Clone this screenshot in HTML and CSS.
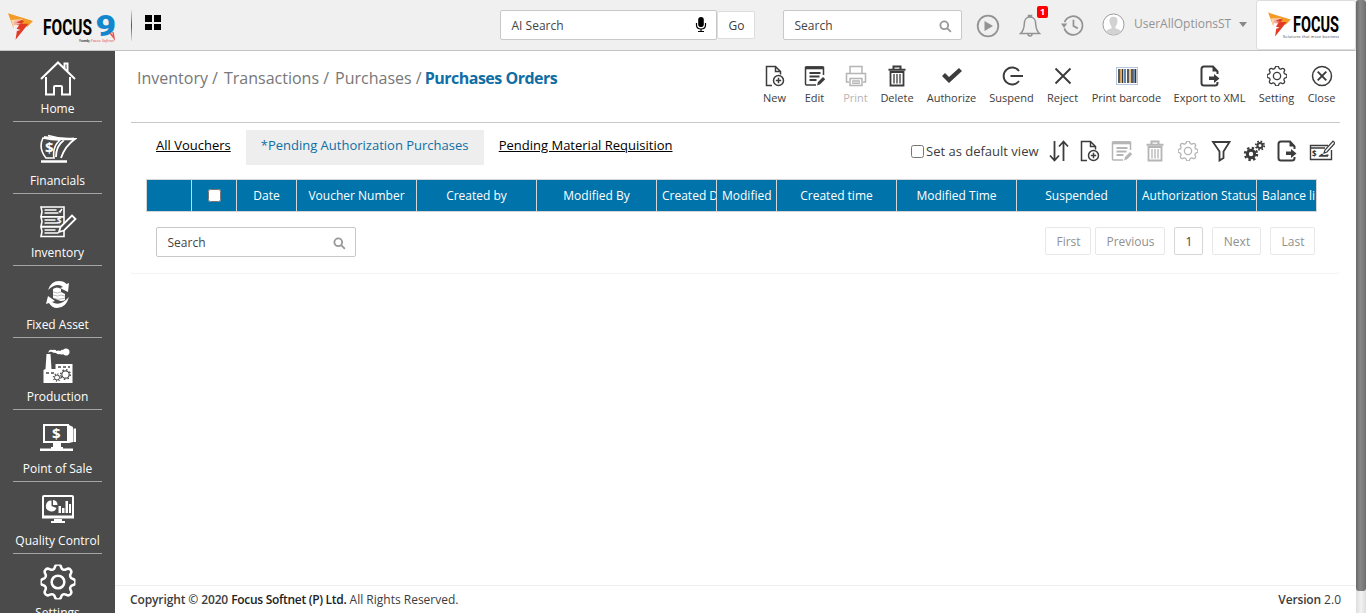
FILE: index.html
```html
<!DOCTYPE html>
<html lang="en">
<head>
<meta charset="utf-8">
<title>Purchases Orders</title>
<link rel="stylesheet" href="styles.css">
</head>
<body>
<svg class="defs" aria-hidden="true">
  <symbol id="gear" viewBox="0 0 16 16"><path d="M9.405 1.05c-.413-1.4-2.397-1.4-2.81 0l-.1.34a1.464 1.464 0 0 1-2.105.872l-.31-.17c-1.283-.698-2.686.705-1.987 1.987l.169.311c.446.82.023 1.841-.872 2.105l-.34.1c-1.4.413-1.4 2.397 0 2.81l.34.1a1.464 1.464 0 0 1 .872 2.105l-.17.31c-.698 1.283.705 2.686 1.987 1.987l.311-.169a1.464 1.464 0 0 1 2.105.872l.1.34c.413 1.4 2.397 1.4 2.81 0l.1-.34a1.464 1.464 0 0 1 2.105-.872l.31.17c1.283.698 2.686-.705 1.987-1.987l-.169-.311a1.464 1.464 0 0 1 .872-2.105l.34-.1c1.4-.413 1.4-2.397 0-2.81l-.34-.1a1.464 1.464 0 0 1-.872-2.105l.17-.31c.698-1.283-.705-2.686-1.987-1.987l-.311.169a1.464 1.464 0 0 1-2.105-.872z"/><circle cx="8" cy="8" r="2.9"/></symbol>
  <symbol id="new" viewBox="0 0 22 22"><path d="M8 20.500H2.500v-19H11.500l5 5V9.500M11.500 1.500v5h5"/><circle cx="14.500" cy="15.500" r="5"/><path d="M14.500 12.800v5.400M11.800 15.500h5.400"/></symbol>
  <symbol id="edit" viewBox="0 0 22 22"><path d="M19.500 10V2.500h-18v16.500q0 1 1 1H12"/><path d="M1.500 2.700h18" stroke-width="3.200"/><path d="M5.500 8h11M5.500 11.500h10M5.500 15h7" stroke-width="1.800"/><path d="M13 20.500l1-3.500 5-5 2.200 2.200-5 5z" fill="currentColor" stroke="none"/></symbol>
  <symbol id="trash" viewBox="0 0 22 22"><path d="M7.500 4V1.500h7V4M2.500 4.700h17" stroke-width="2"/><path d="M4.500 7h13v13.500h-13z" stroke-width="1.800"/><path d="M8 9v9.500M11 9v9.500M14 9v9.500" stroke-width="1.300"/></symbol>
  <symbol id="export" viewBox="0 0 22 22"><path d="M18.500 9V6.500l-4.500-5H5q-2.500 0-2.500 2.500v14q0 2.500 2.500 2.500h11q2.500 0 2.500-2.500V17" stroke-width="2"/><path d="M13.500 1.500v5h5M10 11.500h5V9l5.500 4.500L15 18v-3h-5z" fill="currentColor" stroke="none"/></symbol>
  <symbol id="find" viewBox="0 0 14 14"><circle cx="5.700" cy="5.700" r="4.200"/><path d="M8.800 8.800l4 4"/></symbol>
  <symbol id="flame" viewBox="0 0 76 84"><path d="M0 2L76 25 59 43 46 38 22 34 17 48z" fill="#f39a27"/><path d="M20 25q17-5 29 0L41 34q13-1 21 0L23 82l4-26 11-3-12-4 8-11-17-1z" fill="#e23a25"/><path d="M9 22L19 53l3-15 19-4-16-4 21-10q-23 0-37 2z" fill="#fff" opacity=".6"/></symbol>
</svg>

<header class="topbar">
  <div class="brand">
    <svg class="brand-flame"><use href="#flame"/></svg>
    <svg class="brand-name" viewBox="0 0 76 32"><text class="logo-word" x="0" y="22" textLength="49" lengthAdjust="spacingAndGlyphs">FOCUS</text><text class="logo-nine" transform="translate(52.500 23) scale(1.180 1)">9</text><path d="M67 20l4 5-1-6" fill="none" stroke="#e55"/><text class="logo-tag" x="36" y="29" textLength="11">Powered by</text><text class="logo-partner" x="48" y="29" textLength="23">Focus Softnet</text></svg>
  </div>
  <span class="rule"></span>
  <div class="tiles"><i></i><i></i><i></i><i></i></div>
  <div class="field ai"><span>AI Search</span><svg class="mic" viewBox="0 0 12 16"><rect x="3.200" y="0" width="5.600" height="10" rx="2.800" fill="#000" stroke="none"/><path d="M1.500 6v2q0 4 4.500 4t4.500-4V6M6 12v3M3 14.500h6" stroke="#000" stroke-width="1.200"/></svg></div>
  <button class="go">Go</button>
  <div class="field global"><span>Search</span><svg class="find"><use href="#find"/></svg></div>
  <nav class="quick">
    <svg class="play" viewBox="0 0 24 24"><circle cx="12" cy="12" r="10.300"/><path d="M8.500 7l8.500 5-8.500 5z" fill="currentColor" stroke="none"/></svg>
    <div class="alerts"><svg viewBox="0 0 22 24"><path d="M11 3C6 3 5.500 6.500 5.300 10 5 15 4.500 17 1.500 19.500h19C17.500 17 17 15 16.700 10 16.500 6.500 16 3 11 3zM9.500 3V1.500h3V3M9 20q0 2 2 2t2-2"/></svg><b>1</b></div>
    <svg class="history" viewBox="0 0 24 24"><path d="M3.500 15A9.700 9.700 0 1 0 3.700 8.500M13 6v6.500l4.500 2.500"/><path d="M0 10h6.500L3.200 14.500z" fill="currentColor" stroke="none"/></svg>
    <svg class="avatar" viewBox="0 0 24 24"><circle cx="12" cy="12" r="11" fill="#fff" stroke="#999" stroke-width="1"/><path d="M12 4C8 4 7.500 7 8 10q.5 3 2 4v2q-4 1-6 3a10.500 10.500 0 0 0 16 0q-2-2-6-3v-2q1.500-1 2-4c.500-3 0-6-4-6z" fill="#d2d2d2" stroke="none"/></svg>
    <span class="user">UserAllOptionsST</span><span class="caret"></span>
  </nav>
  <div class="company"><svg class="company-flame"><use href="#flame"/></svg><svg class="company-name" viewBox="0 0 64 32"><text class="logo-word" x="10" y="20" textLength="46" lengthAdjust="spacingAndGlyphs">FOCUS</text><text class="logo-tag" x="0" y="26" textLength="56">Solutions that move business</text></svg></div>
</header>

<div class="shell">
  <aside class="sidebar">
    <a class="module"><svg viewBox="0 0 38 38"><path d="M2 19L19 2.500 36 19M7 17v17.500h8V27q0-1 1-1h6q1 0 1 1v7.500h8V17M25.500 8V3.500h3V11" stroke-width="2"/></svg><span>Home</span></a>
    <a class="module"><svg viewBox="0 0 38 38"><path d="M2 30.500h26" stroke-width="2.500"/><path d="M4 7Q-1 17 7 27h8q-2-11 6-18Q12 9 4 7z" stroke-width="1.600"/><path d="M5 6q15 3 31 2-10 7-14 19M25 9q-8 6-8 17M9 4.500q13 4 26 2.800" stroke-width="1.800"/><text x="6" y="22" class="coin">$</text></svg><span>Financials</span></a>
    <a class="module"><svg viewBox="0 0 38 38"><path d="M2 4h23v9.700H2l1-5zM2 14h23v9.500H2l1-5zM2 24h23v9.500H2l1-5z" stroke-width="1.600"/><path d="M5.500 7h12M5.500 10h14M5.500 17h11M5.500 20h14M5.500 27h11M5.500 30h14M20 8l1 1 2-3"/><path d="M20 29l1.500-5L33 12.500l3.500 3.500L25 27.500z" fill="#4b4b4b" stroke-width="1.800"/><text x="18" y="21" class="coin tiny">$</text></svg><span>Inventory</span></a>
    <a class="module"><svg viewBox="0 0 38 38"><path d="M9 15Q12 6 20 6q5 0 7.500 3l2.500-1-1 9-8-4 3-1q-6-5-15 3zM30 22q-3 11-12 11-5 0-8-5l-3 1 2-8 7 5-3 1q8 5 17-5z" fill="#fff" stroke="none"/><path d="M14 14q4-3 8 0v3l4 2v6q-4 2-7 0l-5-2z" fill="#fff" stroke="none"/><path d="M14 17q5 2 8 0M14 20q5 2 8 0l4 1M14 23q5 2 8 1l4-1" stroke="#888" stroke-width=".6"/></svg><span>Fixed Asset</span></a>
    <a class="module"><svg viewBox="0 0 38 38"><path d="M4.500 36V23l2-1 1-15h4l1 15h4v-5h17v19z" fill="#fff" stroke="none"/><path d="M9.500 6q0-4 4-3 3-1 4 1 2-1 4 0 1-2 2.500-1a3.600 3.600 0 1 1 0 4q-1 1-3 0-2 1-4-1-3 0-4-1-2-1-3.500 1z" fill="#fff" stroke="none"/><path d="M19 20h3m2 0h3m2 0h2M7 26h3m2 0h3" stroke="#4b4b4b"/><g stroke="#4b4b4b"><circle cx="18" cy="30.500" r="2.500" stroke-width="1"/><circle cx="26.500" cy="27.500" r="3.700" stroke-width="1.200"/><circle cx="26.500" cy="27.500" r="4.800" stroke-dasharray="1.500 2.270"/><circle cx="18" cy="30.500" r="3.500" stroke-dasharray="1 1.750"/></g></svg><span>Production</span></a>
    <a class="module"><svg viewBox="0 0 38 38"><path d="M5 6h24v17H5z" stroke-width="2"/><path d="M1 29.500h33v2.500H1zM14 24h8v4h2v2H12v-2h2zM30 6l4 2v15l-4 1zM34.500 9.500H37V23h-2.500z" fill="#fff" stroke="none"/><text x="13" y="20" class="coin">$</text></svg><span>Point of Sale</span></a>
    <a class="module"><svg viewBox="0 0 38 38"><rect x="4" y="5" width="30" height="21" rx="1" stroke-width="2"/><path d="M3 24.500h32v3H3zM15 28h8v2h3v2H12v-2h3z" fill="#fff" stroke="none"/><path d="M12.500 9.500V15l5 2a5.500 5.500 0 1 1-5-7.500zM14 9a5 5 0 0 1 4.500 5H14zM19.500 15H22v7h-2.500zM23 17h2.500v5H23zM26.500 10H29v12h-2.500zM30 13h2v9h-2z" fill="#fff" stroke="none"/></svg><span>Quality Control</span></a>
    <a class="module last"><svg viewBox="0 0 38 38"><use href="#gear" x="1.500" y="1.500" width="35" height="35" stroke-width="1.150" overflow="visible"/></svg><span>Settings</span></a>
  </aside>

  <main class="content">
    <section class="panel">
      <div class="heading">
        <div class="crumbs"><span>Inventory /</span><span>Transactions /</span><span class="tight">Purchases /</span><strong>Purchases Orders</strong></div>
        <div class="actions">
          <a><svg><use href="#new"/></svg>New</a>
          <a><svg><use href="#edit"/></svg>Edit</a>
          <a class="off"><svg viewBox="0 0 22 22"><path d="M5 8V1.500h12V8M4 17H1.500V8.500h19V17H18M5 13.500h12v7H5zM7 16h8M7 18.300h8"/></svg>Print</a>
          <a><svg><use href="#trash"/></svg>Delete</a>
          <a><svg viewBox="0 0 22 22"><path d="M1 11l3-3 4 4 10-9 3 3L8 18z" fill="currentColor" stroke="none"/></svg>Authorize</a>
          <a><svg viewBox="0 0 22 22"><path d="M18 6A8.500 8.500 0 1 0 18 16M9.500 11H22" stroke-width="1.900"/></svg>Suspend</a>
          <a><svg viewBox="0 0 22 22"><path d="M3.500 3.500l15 15M18.500 3.500l-15 15" stroke-width="1.900"/></svg>Reject</a>
          <a><svg viewBox="0 0 22 22"><rect x=".5" y="2.500" width="21" height="17" stroke="#b5c6dc" stroke-width="1"/><path d="M3 4v14M6.500 4v14M12 4v14M16 4v14M19.500 4v14" stroke="#333" stroke-width="1.600"/><path d="M4.700 4v14M14 4v14" stroke="#d59a58" stroke-width="1.300"/><path d="M9 4v14M17.800 4v14" stroke="#517da7" stroke-width="1.800"/></svg>Print barcode</a>
          <a><svg><use href="#export"/></svg>Export to XML</a>
          <a><svg class="cog"><use href="#gear" overflow="visible"/></svg>Setting</a>
          <a><svg viewBox="0 0 22 22"><circle cx="11" cy="11" r="9.500"/><path d="M6.700 6.700l8.600 8.600M15.300 6.700l-8.600 8.600" stroke-width="1.900"/></svg>Close</a>
        </div>
      </div>

      <div class="views">
        <div class="tabs"><a>All Vouchers</a><a class="active">*Pending Authorization Purchases</a><a>Pending Material Requisition</a></div>
        <div class="view-tools">
          <label><input type="checkbox">Set as default view</label>
          <div class="tool-icons">
            <svg viewBox="0 0 22 22"><path d="M6.500 1v19M2 15.500l4.500 5 4.500-5M15.500 21V2M11 6.500l4.500-5 4.500 5" stroke-width="1.800"/></svg>
            <svg><use href="#new"/></svg>
            <svg class="off"><use href="#edit"/></svg>
            <svg class="off"><use href="#trash"/></svg>
            <svg class="off cog"><use href="#gear" overflow="visible"/></svg>
            <svg viewBox="0 0 22 22"><path d="M3 2h16.500l-6 9.500V18l-4 2.500v-9z" stroke-width="1.800"/></svg>
            <svg viewBox="0 0 22 22"><circle cx="8" cy="14" r="3.700" stroke-width="3"/><circle cx="8" cy="14" r="6" stroke-width="2.400" stroke-dasharray="2.360"/><circle cx="17" cy="5.500" r="2.500" stroke-width="2"/><circle cx="17" cy="5.500" r="4.200" stroke-width="1.800" stroke-dasharray="1.650"/></svg>
            <svg><use href="#export"/></svg>
            <svg class="cheque" viewBox="0 0 26 22"><path d="M19 5.500H1.500v14h21V10M2 8h14" stroke-width="1.400"/><path d="M15 13l1-3 8-9 2 2-8 9z" stroke-width="1.200"/><path d="M10 16.500l3-2 1.500 1.500 5-1M11 16h8" stroke-width="1.500"/><text x="3" y="17" class="dollar">$</text></svg>
          </div>
        </div>
      </div>

      <div class="grid-head">
        <div></div><div><input type="checkbox"></div><div>Date</div><div>Voucher Number</div><div>Created by</div><div>Modified By</div><div class="start">Created D</div><div class="start">Modified</div><div>Created time</div><div>Modified Time</div><div>Suspended</div><div class="start">Authorization Status</div><div class="start">Balance li</div>
      </div>

      <div class="grid-foot">
        <div class="field local"><span>Search</span><svg class="find"><use href="#find"/></svg></div>
        <div class="pager"><button class="first">First</button><button class="prev">Previous</button><button class="page">1</button><button class="next">Next</button><button class="end">Last</button></div>
      </div>
    </section>
    <footer class="footer"><p><span class="semi copyright">Copyright © 2020</span> <span class="semi owner">Focus Softnet (P) Ltd.</span> All Rights Reserved.</p><p><span class="semi version">Version</span> 2.0</p></footer>
  </main>
</div>
<div class="scrollbar"><span></span></div>
</body>
</html>
```
FILE: styles.css
```css
* { box-sizing: border-box; }
html, body { height: 100%; margin: 0; overflow: hidden; }
body { background: #fff; color: #3c3c3c; font-family: "Open Sans", "Liberation Sans", sans-serif; font-size: 12px; display: grid; grid-template: 51px 562px / 1356px 10px; }
svg { display: block; fill: none; stroke: currentColor; stroke-width: 1.5; flex: none; }
svg text { stroke: none; }
.defs { position: absolute; width: 0; height: 0; }
button { padding: 0; font: inherit; color: inherit; background: #fff; border: 1px solid #ddd; border-radius: 2px; }
input[type="checkbox"] { margin: 0; width: 13px; height: 13px; }

.topbar { grid-area: 1 / 1; display: flex; background: #f0f0f0; border-bottom: 1px solid #c4c4c4; }
.brand { width: 131px; display: flex; flex: none; padding: 12px 0 0 8px; }
.brand-flame { width: 25px; height: 29px; stroke: none; }
.brand-name { width: 76px; height: 32px; margin: 1px 0 0 10px; }
.logo-word { font: 700 22.5px "Roboto", sans-serif; fill: #000; }
.logo-nine { font: 900 30px "Roboto", sans-serif; fill: #1287cd; }
.logo-tag { font: 3.5px "Open Sans", sans-serif; fill: #333; }
.logo-partner { font: italic 3.5px "Open Sans", sans-serif; fill: #e33; }
.rule { width: 1px; height: 31px; margin-top: 10px; background: linear-gradient(#ddd, #555 50%, #ddd); }
.tiles { width: 16px; height: 16px; margin: 15px 0 0 13px; display: grid; grid-template-columns: 7px 7px; grid-template-rows: 7px 6px; gap: 2px; }
.tiles i { background: #000; }
.field { display: flex; align-items: center; justify-content: space-between; height: 30px; background: #fff; border: 1px solid #c8c8c8; border-radius: 2px; padding: 0 9px 0 10.5px; color: #444; }
.ai { width: 217px; margin: 10px 0 0 339px; flex: none; }
.mic { width: 12px; height: 16px; margin-top: -1px; }
.go { width: 38px; height: 28px; margin-top: 11px; padding-left: 1px; }
.global { width: 179px; margin: 10px 0 0 28px; flex: none; }
.find { width: 13px; height: 13px; color: #999; stroke-width: 2; margin-top: 3px; }
.quick { width: 294px; flex: none; display: flex; color: #939393; }
.play { width: 24px; height: 24px; margin: 14px 0 0 14px; stroke-width: 1.8; }
.alerts { position: relative; margin: 14px 0 0 19px; }
.alerts svg { width: 22px; height: 24px; }
.alerts b { position: absolute; left: 18px; top: -8px; width: 11px; height: 12px; border-radius: 2px; background: #f00; color: #fff; font-size: 9px; line-height: 12px; text-align: center; }
.history { width: 23px; height: 23px; margin: 14px 0 0 20px; stroke-width: 1.8; }
.avatar { width: 23px; height: 23px; margin: 13px 0 0 18px; }
.user { margin: 15px 0 0 9px; width: 98px; line-height: 17px; white-space: nowrap; }
.caret { width: 0; height: 0; margin: 22px 0 0 7px; border: 4px solid transparent; border-top: 5px solid #888; }
.company { width: 100px; height: 50px; flex: none; display: flex; background: #fff; border: 1px solid #ddd; border-radius: 3px; padding: 11px 0 0 11px; }
.company-flame { width: 23px; height: 25px; stroke: none; }
.company-name { width: 64px; height: 32px; margin-left: -8px; overflow: visible; }

.shell { grid-area: 2 / 1; display: flex; min-height: 0; }
.sidebar { width: 115px; flex: none; background: #4b4b4b; color: #fff; overflow: hidden; padding: 0 13px; }
.module { display: flex; flex-direction: column; align-items: center; height: 72px; padding-top: 9px; border-bottom: 1px solid #a5a5a5; width: 89px; }
.module:first-child { height: 71px; }
.module svg { width: 38px; height: 38px; }
.module span { line-height: 18px; margin-top: 3px; white-space: nowrap; }
.module:first-child span { margin-top: 2px; }
.last { border: 0; }
.coin { font: 700 15px "Open Sans", sans-serif; fill: #fff; }
.tiny { font-size: 8px; }
.content { flex: 1; min-width: 0; display: flex; flex-direction: column; justify-content: space-between; }
.panel { margin: 0 16px 0 15px; height: 223px; border-bottom: 1px solid #f2f2f2; border-radius: 0 0 4px 4px; }
.heading { height: 72px; margin-left: 1px; display: flex; justify-content: space-between; border-bottom: 1px solid #c8c8c8; }
.crumbs { display: flex; padding: 16px 0 0 6px; font-size: 16px; line-height: 22px; color: #777; white-space: nowrap; }
.crumbs span { margin-right: 6px; }
.crumbs .tight { margin-right: 3px; }
.crumbs strong { color: #0e6ea5; letter-spacing: -.5px; }
.actions { display: grid; grid-template-columns: 40px 40px 42px 41px 68px 52px 50px 78px 88px 46px 44px; margin-right: -3.5px; padding-top: 14px; font-size: 11px; }
.actions a { display: flex; flex-direction: column; align-items: center; white-space: nowrap; line-height: 16px; gap: 3px; }
.actions svg, .tool-icons svg { width: 22px; height: 22px; }
.actions svg.cog, .tool-icons svg.cog { padding: 1px; stroke-width: 1.050; }
.actions .off, .tool-icons .off { color: #b5b5b5; }
.views { display: flex; justify-content: space-between; height: 56px; padding: 7px 3px 0 11px; font-size: 13px; }
.tabs { display: flex; }
.tabs a { height: 35px; padding: 6px 15px; line-height: 18px; color: #000; text-decoration: underline; white-space: nowrap; }
.tabs .active { width: 238px; background: #eee; color: #0e6ea5; text-decoration: none; }
.view-tools { display: flex; padding-top: 10px; height: 32px; }
.view-tools label { display: flex; align-items: center; gap: 2px; white-space: nowrap; width: 137px; }
.tool-icons { display: grid; grid-template-columns: 31px 32px 33px 33px 33px 33px 33px 33px 28px; }
.tool-icons .cheque { width: 26px; }
.dollar { font: 700 8px "Open Sans", sans-serif; fill: #333; }
.grid-head { display: grid; grid-template-columns: 45px 45px 60px 120px 120px 120px 60px 60px 120px 120px 120px 120px 60px; width: 1171px; height: 33px; margin-left: 16px; border: 1px solid #d5d5d5; border-right: 0; color: #fff; }
.grid-head > div { display: flex; align-items: center; justify-content: center; white-space: nowrap; overflow: hidden; background: #0073aa; border-right: 1px solid #d5d5d5; }
.grid-head > .start { justify-content: flex-start; padding-left: 5px; }
.grid-foot { display: flex; justify-content: space-between; padding: 15px 25px 0 26px; }
.local { width: 200px; }
.pager { display: flex; height: 28px; color: #909090; }
.pager button { border-color: #e8e8e8; padding-left: 1px; }
.first { width: 46px; margin-right: 4px; }
.prev { width: 70px; margin-right: 9px; }
.pager .page { width: 29px; margin-right: 9px; color: #444; border-color: #d5d5d5; }
.next { width: 49px; margin-right: 9px; }
.end { width: 45px; }
.footer { height: 28px; border-top: 1px solid #eee; padding: 0 15px; display: flex; justify-content: space-between; line-height: 28px; }
.footer p { margin: 0; }
.semi { font-weight: 600; }
.copyright { letter-spacing: -.12px; }
.owner { color: #222; letter-spacing: -.3px; }
.version { letter-spacing: -.15px; }
.scrollbar { grid-area: 1 / 2 / 3 / 3; background: linear-gradient(90deg, #ddd, #f2f2f2 50%, #ddd); }
.scrollbar span { display: block; height: 591px; border-radius: 3px; background: linear-gradient(90deg, #686868, #888 40%, #707070); }
```
